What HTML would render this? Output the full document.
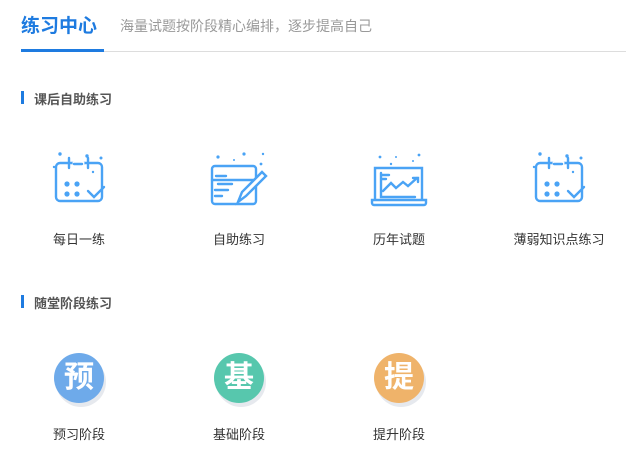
<!DOCTYPE html>
<html><head><meta charset="utf-8"><style>
body{margin:0;width:626px;height:461px;background:#fff;font-family:"Liberation Sans","Noto Sans CJK SC",sans-serif;position:relative;overflow:hidden}
.a{position:absolute;white-space:nowrap}
.lbl{font-size:13px;color:#333;width:160px;text-align:center;margin-left:-1px}
.sec{font-size:13px;font-weight:bold;color:#555}
.bar{position:absolute;width:3px;height:13px;background:#1e7be0}
.c{position:absolute;width:50px;height:50px;border-radius:50%;color:#fff;font-size:30px;font-weight:bold;line-height:50px;text-align:center;box-shadow:2px 4px 0 #e6e9ee}
svg{position:absolute}
</style></head><body>
<div class="a" style="left:21px;top:11px;font-size:19px;font-weight:bold;color:#1e7be0">练习中心</div>
<div class="a" style="left:120px;top:16px;font-size:14px;color:#999">海量试题按阶段精心编排，逐步提高自己</div>
<div class="a" style="left:21px;top:51px;width:605px;height:1px;background:#ddd"></div>
<div class="a" style="left:21px;top:49px;width:83px;height:3px;background:#1e7be0"></div>

<div class="bar" style="left:21px;top:91px"></div>
<div class="a sec" style="left:34px;top:89px">课后自助练习</div>

<svg width="626" height="80" style="left:0;top:135px" fill="none" stroke="#4aa3f5" stroke-width="2.4" stroke-linecap="round">
<g id="cal">
<rect x="56" y="28" width="46" height="38" rx="4"/>
<line x1="69" y1="23" x2="69" y2="33"/><line x1="88" y1="23" x2="88" y2="33"/><line x1="74" y1="28" x2="83" y2="28" stroke="#fff" stroke-width="3"/>
<line x1="74" y1="29" x2="82" y2="29"/>
<g fill="#4aa3f5" stroke="none"><circle cx="67" cy="49" r="2.6"/><circle cx="77" cy="49" r="2.6"/><circle cx="67" cy="59" r="2.6"/><circle cx="77" cy="59" r="2.6"/>
<circle cx="60" cy="19" r="1.7"/><circle cx="87" cy="21" r="1.7"/><circle cx="101" cy="23" r="1.5"/><circle cx="54" cy="32" r="1.2"/><circle cx="93" cy="37" r="1.2"/></g>
<path d="M88 56l6 6 10-10"/>
</g>
<use href="#cal" x="480"/>
<g>
<rect x="212" y="31" width="44" height="38" rx="3"/>
<line x1="216" y1="41" x2="226" y2="41"/><line x1="218" y1="49" x2="232" y2="49"/><line x1="215" y1="55" x2="228" y2="55"/><line x1="215" y1="61" x2="222" y2="61"/><line x1="212" y1="45" x2="256" y2="45"/>
<path d="M238 67l4-10 20-20 4 4-20 20z" fill="#fff"/>
<g fill="#4aa3f5" stroke="none"><circle cx="218" cy="22" r="1.6"/><circle cx="244" cy="19" r="1.6"/><circle cx="263" cy="19" r="1.2"/><circle cx="234" cy="25" r="1"/><circle cx="261" cy="29" r="1.4"/></g>
</g>
<g>
<path d="M375 64V33h47v31"/><path d="M372 65h54v3a2 2 0 0 1-2 2h-50a2 2 0 0 1-2-2z"/>
<line x1="382" y1="40" x2="389" y2="40"/><line x1="382" y1="44" x2="386" y2="44"/>
<path d="M381 38v24h34"/><path d="M383 56l8-8 5 5 7-6 5 4 9-8"/><path d="M413 43h5v4"/>
<g fill="#4aa3f5" stroke="none"><circle cx="380" cy="22" r="1.4"/><circle cx="396" cy="22" r="1"/><circle cx="419" cy="20" r="1.4"/><circle cx="391" cy="29" r="1.2"/><circle cx="413" cy="26" r="1"/></g>
</g>
</svg>
<div class="a lbl" style="left:0;top:229px">每日一练</div>
<div class="a lbl" style="left:160px;top:229px">自助练习</div>
<div class="a lbl" style="left:320px;top:229px">历年试题</div>
<div class="a lbl" style="left:480px;top:229px">薄弱知识点练习</div>

<div class="bar" style="left:21px;top:295px"></div>
<div class="a sec" style="left:34px;top:293px">随堂阶段练习</div>

<div class="c" style="left:54px;top:353px;background:#6eaaea">预</div>
<div class="c" style="left:214px;top:353px;background:#57c7ad">基</div>
<div class="c" style="left:374px;top:353px;background:#efb36a">提</div>
<div class="a lbl" style="left:0;top:424px">预习阶段</div>
<div class="a lbl" style="left:160px;top:424px">基础阶段</div>
<div class="a lbl" style="left:320px;top:424px">提升阶段</div>
</body></html>
